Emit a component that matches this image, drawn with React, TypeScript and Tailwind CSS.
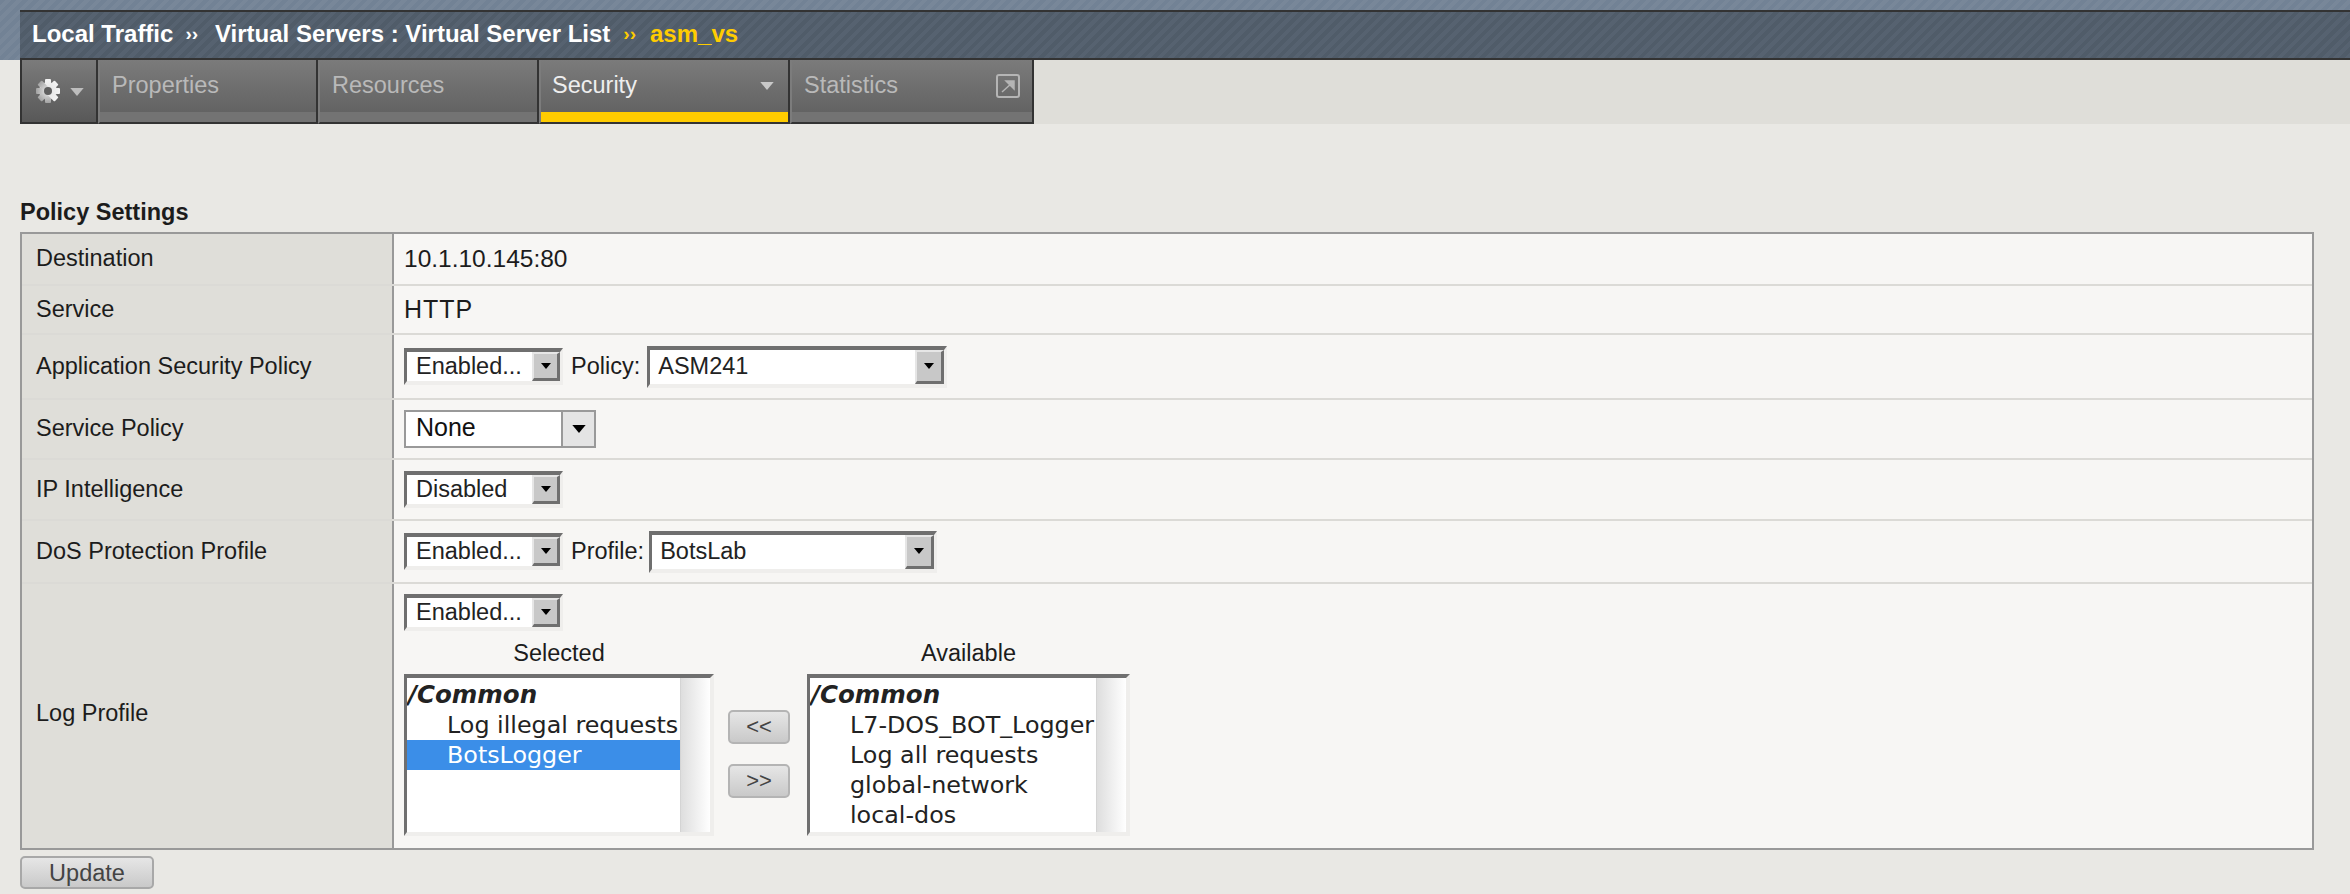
function Arrow({ className }: { className: string }) {
  return (
    <svg viewBox="0 0 10 6" className={className}>
      <path d="M0 0h10L5 6z" fill="currentColor" />
    </svg>
  );
}

function Gear() {
  const teeth = [0, 45, 90, 135];
  return (
    <svg viewBox="0 0 26 26" className="w-[26px] h-[26px]">
      <defs>
        <linearGradient id="gear" x1="0" y1="0" x2="0" y2="1">
          <stop offset="0" stopColor="#f4f4f4" />
          <stop offset="0.55" stopColor="#e2e2e2" />
          <stop offset="1" stopColor="#a2a2a2" />
        </linearGradient>
      </defs>
      <g fill="url(#gear)">
        <circle cx="13" cy="13" r="9" />
        {teeth.map((a) => (
          <rect key={a} x="10" y="1" width="6" height="24" rx="1" transform={`rotate(${a} 13 13)`} />
        ))}
      </g>
      <circle cx="13" cy="13" r="4" fill="#5f5f5f" />
    </svg>
  );
}

function Tab({
  width,
  active,
  children,
}: {
  width: string;
  active?: boolean;
  children: React.ReactNode;
}) {
  return (
    <div className={`${width} flex flex-col border-l-2 border-r-2 border-b-2 border-l-[#7c7c7c] border-r-[#333333] border-b-[#333333]`}>
      <div className="h-[52px] flex items-center justify-between pl-[12px] pr-[12px] bg-gradient-to-b from-[#7b7b7b] to-[#636363]">
        {children}
      </div>
      <div className={active ? "h-[10px] bg-[#ffcc00]" : "h-[10px] bg-[#737373]"} />
    </div>
  );
}

function Select({
  label,
  width,
  tall,
  buttonWidth,
}: {
  label: string;
  width: string;
  tall?: boolean;
  buttonWidth: string;
}) {
  return (
    <div
      className={`${width} ${tall ? "h-[42px]" : "h-[37px]"} flex bg-white border-t-4 border-l-[3px] border-r-[3px] border-b-4 border-t-[#6f6f6f] border-l-[#6f6f6f] border-r-[#efeeec] border-b-[#efeeec]`}
    >
      <span className={`flex-1 flex items-center ${tall ? "pl-[8px]" : "pl-[9px]"} text-[#222222] whitespace-nowrap`}>{label}</span>
      <span className={`${buttonWidth} flex items-center justify-center bg-[#c8c8c8] border-t-2 border-l-2 border-r-[3px] border-b-[3px] border-t-[#e6e6e6] border-l-[#e6e6e6] border-r-[#6f6f6f] border-b-[#6f6f6f]`}>
        <Arrow className="w-[10px] h-[6px] text-black" />
      </span>
    </div>
  );
}

function ListBox({
  width,
  listWidth,
  items,
  selected,
}: {
  width: string;
  listWidth: string;
  items: string[];
  selected?: string;
}) {
  return (
    <div className={`${width} h-[162px] flex bg-white border-t-4 border-l-[3px] border-r-4 border-b-4 border-t-[#6f6f6f] border-l-[#6f6f6f] border-r-[#efeeec] border-b-[#efeeec]`}>
      <div className={`${listWidth} pt-[2px] overflow-hidden font-['DejaVu_Sans',sans-serif] text-[23.8px] leading-[30px] text-[#222222]`}>
        <div className="pl-[1px] text-[24.5px] font-bold italic">/Common</div>
        {items.map((item) => (
          <div
            key={item}
            className={item === selected ? "pl-[40px] whitespace-nowrap bg-[#3b8ee8] text-white" : "pl-[40px] whitespace-nowrap"}
          >
            {item}
          </div>
        ))}
      </div>
      <div className="flex-1 border-l border-l-[#d4d4d4] bg-gradient-to-r from-[#dedede] to-white" />
    </div>
  );
}

function MoveButton({ label }: { label: string }) {
  return (
    <button className="w-[62px] h-[34px] rounded-[5px] border-2 border-[#b4b4b4] bg-gradient-to-b from-[#e6e6e6] to-[#c9c9c9] text-[22px] leading-[30px] text-[#444444]">
      {label}
    </button>
  );
}

function Row({
  label,
  height,
  children,
}: {
  label: string;
  height: string;
  children: React.ReactNode;
}) {
  return (
    <div className={`${height} flex border-b-2 border-b-[#dbdad6]`}>
      <div className="w-[372px] shrink-0 flex items-center pl-[14px] bg-[#dfded9] border-r-2 border-r-[#999999]">
        {label}
      </div>
      <div className="flex-1 flex items-center pl-[10px]">{children}</div>
    </div>
  );
}

export default function App() {
  return (
    <div className="w-[2350px] h-[894px] overflow-hidden bg-[#e9e8e4] font-['Liberation_Sans',sans-serif] text-[23.5px] text-[#1c1c1c]">
      {/* Breadcrumb */}
      <div className="h-[60px] pt-[10px] pl-[20px] bg-[repeating-linear-gradient(135deg,#728295_0,#728295_4px,#788799_4px,#788799_8px)]">
        <div className="h-[50px] flex items-center pl-[12px] pb-[2px] border-y-2 border-y-[#333333] text-[24px] font-bold text-white bg-[repeating-linear-gradient(135deg,#505c69_0,#505c69_4px,#566270_4px,#566270_8px)]">
          <span>Local Traffic</span>
          <span className="ml-[12px] mr-[17px] text-[19px]">››</span>
          <span>Virtual Servers : Virtual Server List</span>
          <span className="ml-[13px] mr-[14px] text-[19px] text-[#ffcc00]">››</span>
          <span className="text-[#ffcc00]">asm_vs</span>
        </div>
      </div>

      {/* Tabs */}
      <div className="h-[64px] flex pl-[20px]">
        <div className="w-[78px] flex items-center pl-[13px] gap-[9px] border-2 border-t-0 border-[#333333] bg-gradient-to-b from-[#7b7b7b] to-[#585858]">
          <Gear />
          <Arrow className="w-[14px] h-[8px] mt-[2px] text-[#bdbdbd]" />
        </div>
        <Tab width="w-[220px]">
          <span className="text-[#b9b9b9]">Properties</span>
        </Tab>
        <Tab width="w-[221px]">
          <span className="text-[#b9b9b9]">Resources</span>
        </Tab>
        <Tab width="w-[251px]" active>
          <span className="-ml-[1px] text-[#eeeeee]">Security</span>
          <Arrow className="w-[14px] h-[8px] mr-[2px] text-[#c8c8c8]" />
        </Tab>
        <Tab width="w-[244px]">
          <span className="text-[#b9b9b9]">Statistics</span>
          <svg viewBox="0 0 24 24" className="w-[24px] h-[24px] text-[#b5b5b5]">
            <rect x="1" y="1" width="22" height="22" rx="2" fill="none" stroke="currentColor" strokeWidth="2" />
            <path d="M6 18 16 9M10 7h8v8z" fill="currentColor" stroke="currentColor" strokeWidth="1.5" />
          </svg>
        </Tab>
        <div className="flex-1 bg-[#dfded9]" />
      </div>

      <div className="pt-[74px] pl-[20px] pr-[36px]">
        <h2 className="font-bold leading-[28px] mb-[6px]">Policy Settings</h2>

        <div className="border-2 border-[#999999] bg-[#f7f6f4]">
          <Row label="Destination" height="h-[52px]">
            <span className="text-[24.5px]">10.1.10.145:80</span>
          </Row>
          <Row label="Service" height="h-[49px]">
            <span className="text-[25px] tracking-[1px]">HTTP</span>
          </Row>
          <Row label="Application Security Policy" height="h-[65px]">
            <Select label="Enabled..." width="w-[159px]" buttonWidth="w-[28px]" />
            <span className="ml-[8px] mr-[7px]">Policy:</span>
            <Select label="ASM241" width="w-[300px]" buttonWidth="w-[29px]" tall />
          </Row>
          <Row label="Service Policy" height="h-[60px]">
            <div className="w-[192px] h-[38px] flex bg-white border-2 border-[#999999]">
              <span className="flex-1 pl-[10px] text-[25px] leading-[30px] text-[#111111]">None</span>
              <span className="w-[33px] flex items-center justify-center bg-[#e4e4e4] border-l-2 border-l-[#999999]">
                <Arrow className="w-[14px] h-[8px] text-black" />
              </span>
            </div>
          </Row>
          <Row label="IP Intelligence" height="h-[61px]">
            <Select label="Disabled" width="w-[159px]" buttonWidth="w-[28px]" />
          </Row>
          <Row label="DoS Protection Profile" height="h-[63px]">
            <Select label="Enabled..." width="w-[159px]" buttonWidth="w-[28px]" />
            <span className="ml-[8px] mr-[5px]">Profile:</span>
            <Select label="BotsLab" width="w-[288px]" buttonWidth="w-[29px]" tall />
          </Row>
          <div className="h-[264px] flex">
            <div className="w-[372px] shrink-0 flex items-center pl-[14px] pb-[5px] bg-[#dfded9] border-r-2 border-r-[#999999]">
              Log Profile
            </div>
            <div className="flex-1 pt-[10px] pl-[10px]">
              <Select label="Enabled..." width="w-[159px]" buttonWidth="w-[28px]" />
              <div className="flex">
                <div className="w-[310px]">
                  <div className="h-[43px] flex items-center justify-center pt-[2px]">Selected</div>
                  <ListBox
                    width="w-[310px]"
                    listWidth="w-[273px]"
                    items={["Log illegal requests", "BotsLogger"]}
                    selected="BotsLogger"
                  />
                </div>
                <div className="flex flex-col gap-[20px] pt-[79px] ml-[14px] mr-[17px]">
                  <MoveButton label="<<" />
                  <MoveButton label=">>" />
                </div>
                <div className="w-[323px]">
                  <div className="h-[43px] flex items-center justify-center pt-[2px]">Available</div>
                  <ListBox
                    width="w-[323px]"
                    listWidth="w-[286px]"
                    items={["L7-DOS_BOT_Logger", "Log all requests", "global-network", "local-dos"]}
                  />
                </div>
              </div>
            </div>
          </div>
        </div>

        <button className="mt-[6px] w-[134px] h-[33px] rounded-[5px] border-2 border-[#a8a8a8] bg-gradient-to-b from-[#e6e6e6] to-[#c9c9c9] leading-[26px] text-[#444444]">
          Update
        </button>
      </div>
    </div>
  );
}
